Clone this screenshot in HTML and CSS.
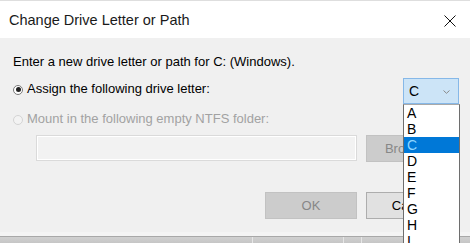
FILE: index.html
```html
<!DOCTYPE html>
<html>
<head>
<meta charset="utf-8">
<link rel="stylesheet" href="styles.css">
</head>
<body>
<div class="dialog">
  <div class="titlebar">
    <span class="title">Change Drive Letter or Path</span>
    <svg class="close" width="12" height="12" viewBox="0 0 12 12"><path d="M0.5 0.5 L11.5 11.5 M11.5 0.5 L0.5 11.5" stroke="#111" stroke-width="1" fill="none"/></svg>
  </div>
  <div class="content">
    <div class="intro">Enter a new drive letter or path for C: (Windows).</div>
    <div class="row assign">
      <label class="option"><span class="radio checked"></span>Assign the following drive letter:</label>
      <div class="combo">
        <span class="combo-value">C</span>
        <svg class="chev" width="7" height="4" viewBox="0 0 7 4"><path d="M0.5 0.5 L3.5 3.3 L6.5 0.5" stroke="#8a8a8a" stroke-width="1" fill="none"/></svg>
        <ul class="list">
          <li>A</li><li>B</li><li class="sel">C</li><li>D</li><li>E</li><li>F</li><li>G</li><li>H</li><li>I</li>
        </ul>
      </div>
    </div>
    <label class="option disabled"><span class="radio"></span>Mount in the following empty NTFS folder:</label>
    <div class="row folder">
      <div class="textbox"></div>
      <div class="btn disabled">Browse...</div>
    </div>
    <div class="row actions">
      <div class="btn disabled">OK</div>
      <div class="btn">Cancel</div>
    </div>
  </div>
  <div class="behind">
    <span class="seg s1"></span><span class="seg s2"></span><span class="seg s3"></span>
  </div>
</div>
</body>
</html>
```
FILE: styles.css
```css
html, body {
  margin: 0;
  padding: 0;
}
body {
  width: 470px;
  height: 243px;
  overflow: hidden;
  background: #c9c9c9;
  font-family: "Liberation Sans", Arial, sans-serif;
  font-size: 13px;
  color: #000;
}
.dialog {
  width: 470px;
  display: flex;
  flex-direction: column;
}
.titlebar {
  height: 37px;
  background: #fff;
  border-top: 1px solid #dedede;
  display: flex;
  align-items: center;
  justify-content: space-between;
  padding: 0 14px 0 9px;
}
.title {
  font-size: 14.5px;
  color: #1a1a1a;
  margin-top: 1px;
}
.close {
  display: block;
  margin-top: 2px;
}
.content {
  height: 198px;
  background: #f0f0f0;
  padding: 16px 0 0 13px;
  box-sizing: border-box;
  display: flex;
  flex-direction: column;
  border-bottom: 4px solid #f4f4f4;
}
.intro {
  line-height: 16px;
}
.row {
  display: flex;
}
.assign {
  margin-top: 8px;
  height: 26px;
  align-items: flex-start;
}
.option {
  display: flex;
  align-items: center;
  line-height: 16px;
}
.assign .option {
  margin-top: 3px;
}
.option.disabled {
  margin-top: 7px;
  color: #a2a2a2;
}
.radio {
  width: 10px;
  height: 10px;
  border: 1px solid #7a7a7a;
  border-radius: 50%;
  background: #fff;
  box-sizing: border-box;
  margin: 1px 4px 0 0;
  position: relative;
  flex: none;
}
.radio.checked::after {
  content: "";
  position: absolute;
  left: 1.5px;
  top: 1.5px;
  width: 5px;
  height: 5px;
  border-radius: 50%;
  background: #222;
}
.option.disabled .radio {
  border-color: #d4d4d4;
  background: #f3f3f3;
}
.combo {
  margin-left: auto;
  margin-right: 11px;
  width: 56px;
  height: 26px;
  box-sizing: border-box;
  background: #cce4f7;
  border: 1px solid #86b8e8;
  display: flex;
  align-items: center;
  justify-content: space-between;
  padding: 0 8px 0 5px;
  position: relative;
}
.combo-value {
  font-size: 14px;
}
.chev {
  display: block;
  margin-top: 1px;
}
.list {
  position: absolute;
  left: -1px;
  top: 25px;
  width: 57px;
  margin: 0;
  padding: 0;
  list-style: none;
  background: #fff;
  border: 1px solid #6e6e6e;
  border-top-color: #a9a9a9;
  box-sizing: border-box;
  z-index: 5;
}
.list li {
  height: 16px;
  line-height: 16px;
  font-size: 14px;
  padding-left: 3px;
}
.list li.sel {
  background: #0078d7;
  color: #8fd6ff;
}
.folder {
  margin-top: 8px;
  padding-left: 23px;
  gap: 9px;
  align-items: flex-start;
}
.textbox {
  width: 321px;
  height: 26px;
  box-sizing: border-box;
  background: #f2f2f2;
  border: 1px solid #dadada;
  box-shadow: inset 0 0 0 1px #fff;
}
.btn {
  width: 92px;
  height: 27px;
  box-sizing: border-box;
  background: #e1e1e1;
  border: 1px solid #adadad;
  display: flex;
  align-items: center;
  justify-content: center;
  font-size: 13px;
}
.btn.disabled {
  background: #cccccc;
  border-color: #c2c2c2;
  color: #878787;
}
.actions {
  margin-top: 30px;
  padding-left: 252px;
  gap: 9px;
}
.behind {
  height: 7px;
  background: linear-gradient(#a8a8a8 0, #a8a8a8 1px, #d0d0d0 1px, #c6c6c6 7px);
  position: relative;
}
.seg {
  position: absolute;
  top: 1px;
  bottom: 0;
  width: 1px;
  background: #e6e6e6;
}
.s1 { left: 252px; }
.s2 { left: 343px; }
.s3 { left: 361px; }
```
